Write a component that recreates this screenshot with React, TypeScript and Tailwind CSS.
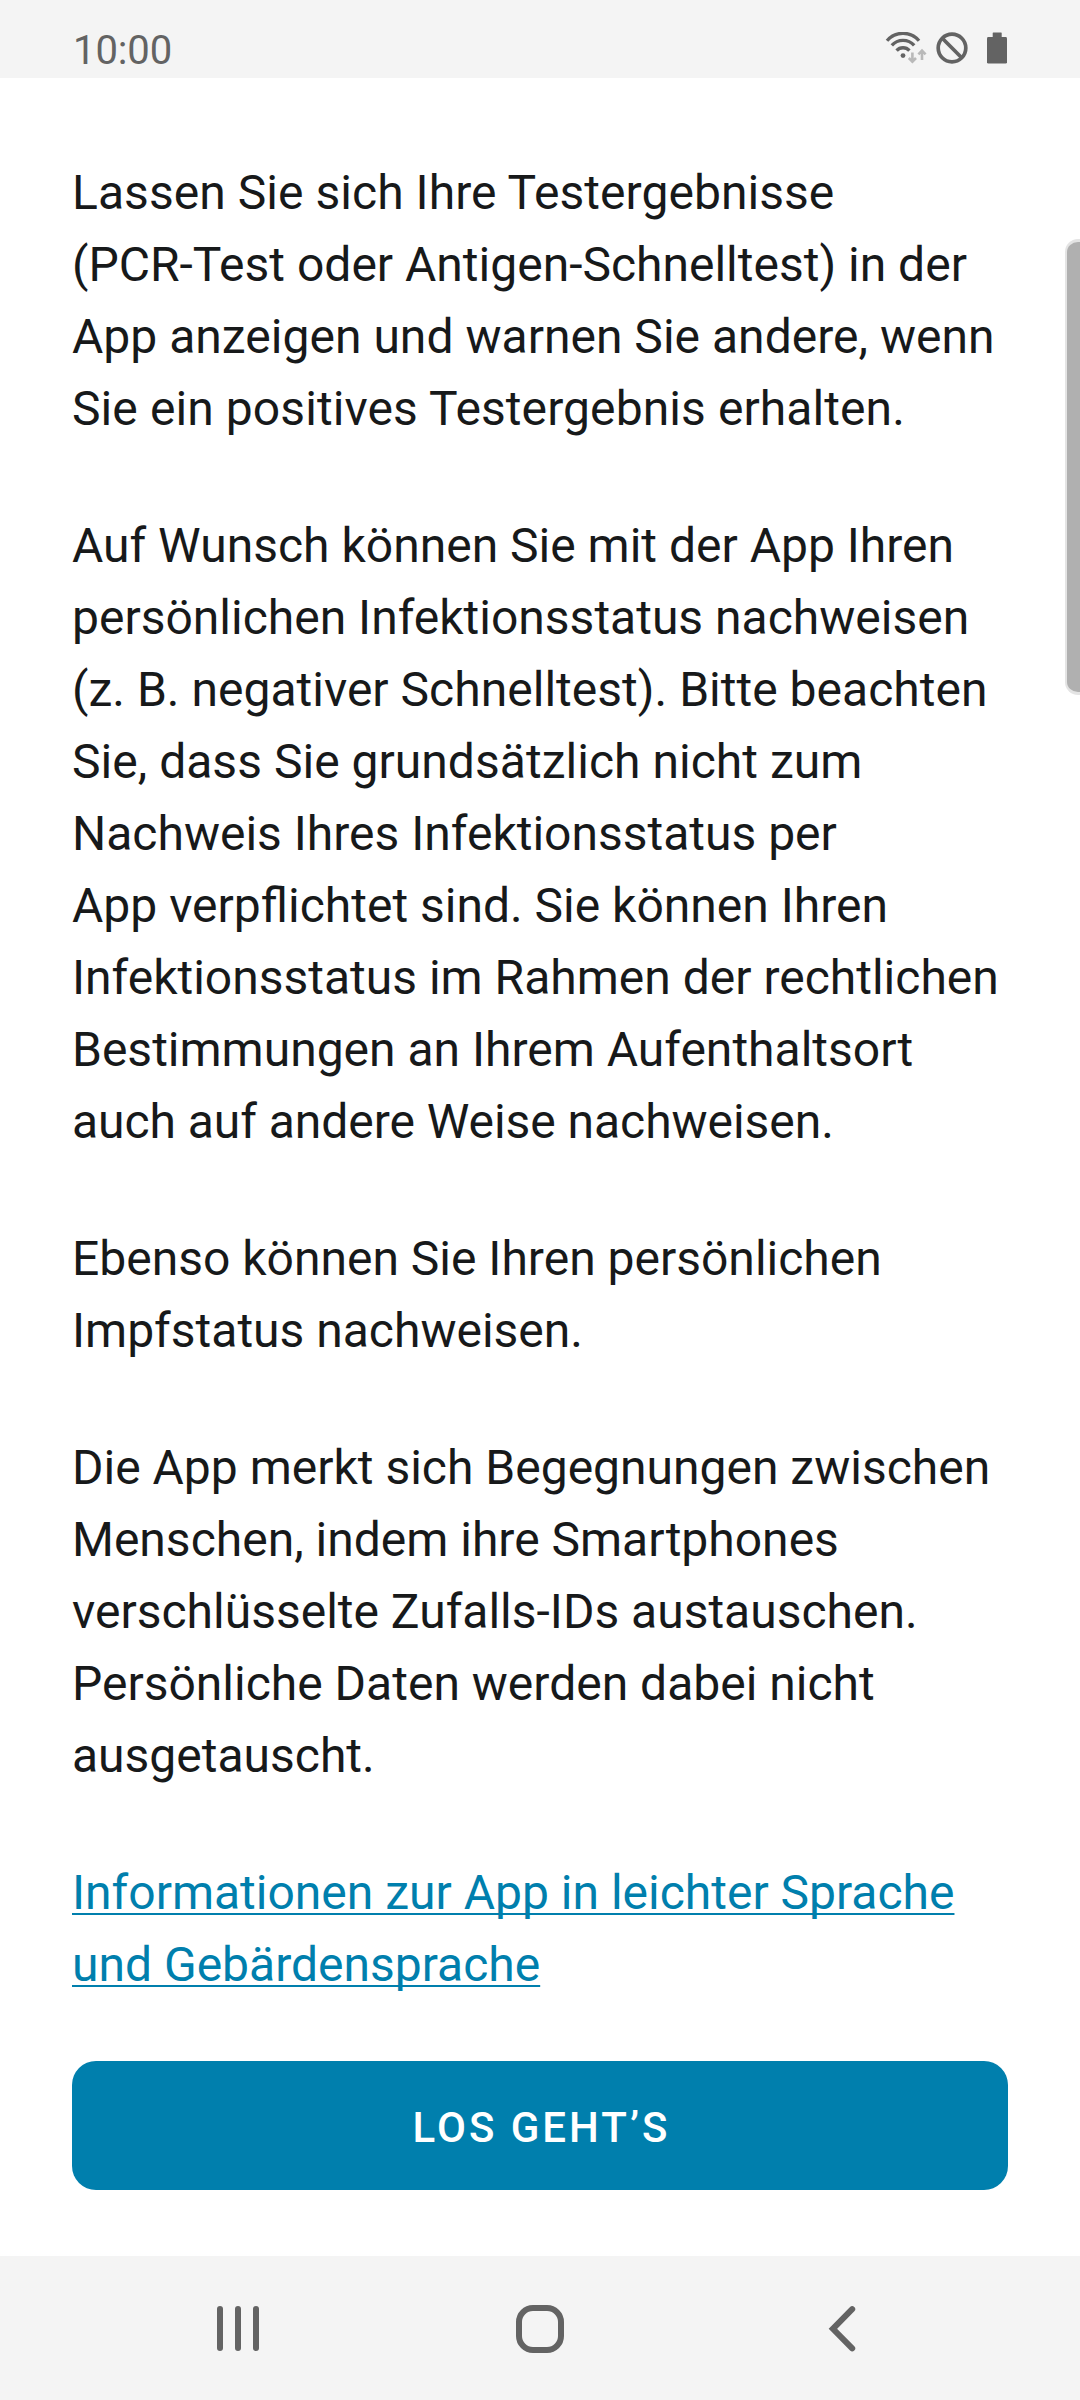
type Line = { text: string; className?: string };

const paragraphs: Line[][] = [
  [
    { text: "Lassen Sie sich Ihre Testergebnisse", className: "tracking-[0.05px]" },
    { text: "(PCR-Test oder Antigen-Schnelltest) in der" },
    { text: "App anzeigen und warnen Sie andere, wenn", className: "tracking-[0.02px]" },
    { text: "Sie ein positives Testergebnis erhalten.", className: "tracking-[0.09px]" },
  ],
  [
    { text: "Auf Wunsch können Sie mit der App Ihren" },
    { text: "persönlichen Infektionsstatus nachweisen" },
    { text: "(z. B. negativer Schnelltest). Bitte beachten", className: "tracking-[0.02px]" },
    { text: "Sie, dass Sie grundsätzlich nicht zum", className: "tracking-[0.03px]" },
    { text: "Nachweis Ihres Infektionsstatus per" },
    { text: "App verpflichtet sind. Sie können Ihren" },
    { text: "Infektionsstatus im Rahmen der rechtlichen" },
    { text: "Bestimmungen an Ihrem Aufenthaltsort" },
    { text: "auch auf andere Weise nachweisen.", className: "tracking-[-0.05px]" },
  ],
  [{ text: "Ebenso können Sie Ihren persönlichen" }, { text: "Impfstatus nachweisen." }],
  [
    { text: "Die App merkt sich Begegnungen zwischen" },
    { text: "Menschen, indem ihre Smartphones" },
    { text: "verschlüsselte Zufalls-IDs austauschen." },
    { text: "Persönliche Daten werden dabei nicht" },
    { text: "ausgetauscht." },
  ],
];

function WifiIcon() {
  return (
    <svg className="h-[34px] w-[42px]" viewBox="0 0 42 34" fill="none">
      <g stroke="#636363" strokeWidth="3.3">
        <path d="M2 8.7a21 21 0 0 1 32 0" />
        <path d="M6.8 13.3a15 15 0 0 1 22.4 0" />
        <path d="M11.6 18.6a8.6 8.6 0 0 1 12.8 0" />
      </g>
      <circle cx="18" cy="23.6" r="2.4" fill="#636363" />
      <g stroke="#b9b9b9" strokeWidth="2.6">
        <path d="M27.4 20.4v10M23.8 26l3.6 3.7L31 26" />
        <path d="M37 28V18M33.4 22.4l3.6-3.7 3.6 3.7" />
      </g>
    </svg>
  );
}

function BlockIcon() {
  return (
    <svg className="ml-[9px] h-[32px] w-[32px]" viewBox="0 0 32 32" fill="none" stroke="#636363">
      <circle cx="16" cy="16" r="13.8" strokeWidth="3.7" />
      <path d="M6.3 6.3l19.4 19.4" strokeWidth="3.7" />
    </svg>
  );
}

function BatteryIcon() {
  return (
    <svg className="ml-[19px] h-[32px] w-[20px]" viewBox="0 0 20 32" fill="#636363">
      <rect x="5.7" y="0.5" width="9" height="7" rx="0.6" />
      <rect x="0" y="5" width="20" height="26.6" rx="1.4" />
    </svg>
  );
}

export default function App() {
  return (
    <div className="relative flex h-[2400px] w-[1080px] flex-col overflow-hidden bg-white font-['Roboto',sans-serif] text-[#17191a]">
      <header className="flex h-[78px] shrink-0 items-start justify-between bg-[#f4f4f4] pr-[73px] pl-[73px] text-[40px] leading-[48px] text-[#636363]">
        <span className="mt-[27px] tracking-[-0.1px]">10:00</span>
        <div className="mt-8 flex items-start">
          <WifiIcon />
          <BlockIcon />
          <BatteryIcon />
        </div>
      </header>

      <main className="flex flex-1 flex-col px-[72px] pt-[79px]">
        <div className="flex flex-col gap-[65px] text-[48px] leading-[72px] whitespace-nowrap">
          {paragraphs.map((lines) => (
            <p key={lines[0].text}>
              {lines.map((line) => (
                <span className={`block ${line.className ?? ""}`} key={line.text}>{line.text}</span>
              ))}
            </p>
          ))}
          <a className="text-[#007fad] underline decoration-2 underline-offset-4 [text-decoration-skip-ink:none]" href="#info">
            <span className="block">Informationen zur App in leichter Sprache</span>
            <span className="block">und Gebärdensprache</span>
          </a>
        </div>
        <button className="mt-[60px] h-[129px] rounded-[24px] bg-[#007fad] pt-[4px] pl-[3px] text-[42px] font-medium tracking-[3px] text-white">
          LOS GEHT’S
        </button>
      </main>

      <nav className="flex h-36 shrink-0 items-start bg-[#f4f4f4]">
        <div className="mt-[50px] ml-[217px] flex gap-3">
          <span className="h-[45px] w-[6px] rounded-full bg-[#636363]" />
          <span className="h-[45px] w-[6px] rounded-full bg-[#636363]" />
          <span className="h-[45px] w-[6px] rounded-full bg-[#636363]" />
        </div>
        <span className="mt-[49px] ml-[257px] size-12 rounded-[17px] border-[6px] border-[#636363]" />
        <svg className="mt-[49px] ml-[264px] h-12 w-[30px]" viewBox="0 0 30 48" fill="none" stroke="#636363" strokeWidth="6" strokeLinecap="round">
          <path d="M24.2 4.2L4.9 23.8l19.3 19.6" />
        </svg>
      </nav>

      {/* Scroll indicator at the right screen edge */}
      <div className="absolute top-[239px] right-0 h-[456px] w-[15px] rounded-l-[13px] border-y-[3px] border-l-2 border-[#e4e4e4] bg-[#b0b0b0]" />
    </div>
  );
}
